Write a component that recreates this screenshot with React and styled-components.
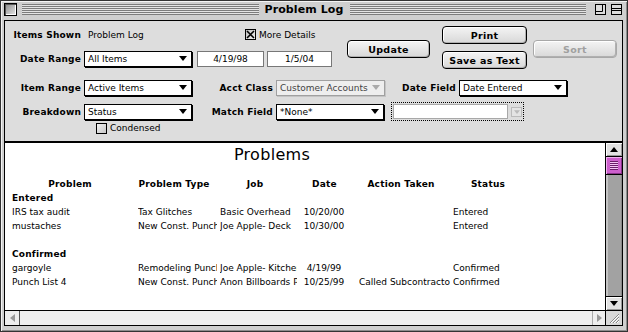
import React from 'react'
import styled, { createGlobalStyle } from 'styled-components'

const sans = `"DejaVu Sans", Verdana, sans-serif`

const GlobalStyle = createGlobalStyle`
  html, body { margin: 0; padding: 0; background: #fff; }
  body { font-family: ${sans}; font-size: 9px; color: #000; }
  * { box-sizing: border-box; }
`

const columns = [
    { key: 'problem', title: 'Problem', width: 126 },
    { key: 'type', title: 'Problem Type', width: 82 },
    { key: 'job', title: 'Job', width: 80 },
    { key: 'date', title: 'Date', width: 59, center: true },
    { key: 'action', title: 'Action Taken', width: 94 },
    { key: 'status', title: 'Status', width: 80 },
]

const groups = [
    {
        name: 'Entered',
        rows: [
            ['IRS tax audit', 'Tax Glitches', 'Basic Overhead', '10/20/00', '', 'Entered'],
            ['mustaches', 'New Const. Punch List', 'Joe Apple- Deck', '10/30/00', '', 'Entered'],
        ],
    },
    {
        name: 'Confirmed',
        rows: [
            ['gargoyle', 'Remodeling Punch List', 'Joe Apple- Kitchen', '4/19/99', '', 'Confirmed'],
            ['Punch List 4', 'New Const. Punch List', 'Anon Billboards Pro', '10/25/99', 'Called Subcontractor', 'Confirmed'],
        ],
    },
]

const DownTri = ({ color = '#000' }) => (
    <svg width="8" height="5" viewBox="0 0 8 5"><polygon points="0,0 8,0 4,5" fill={color} /></svg>
)

const Cross = () => (
    <svg width="9" height="9" viewBox="0 0 9 9">
        <path d="M1 1 L8 8 M8 1 L1 8" stroke="#000" strokeWidth="1.6" />
    </svg>
)

const App = () => {
    return (
        <>
            <GlobalStyle />
            <Window>
                <TitleBar>
                    <CloseBox />
                    <Stripes />
                    <Title>Problem Log</Title>
                    <Stripes />
                    <WidgetBox>
                        <svg width="11" height="11" viewBox="0 0 11 11">
                            <rect x="0.5" y="0.5" width="10" height="10" fill="#ddd" stroke="#000" />
                            <path d="M0.5 7.5 H7.5 V0.5" fill="none" stroke="#000" />
                        </svg>
                    </WidgetBox>
                    <WidgetBox>
                        <svg width="11" height="11" viewBox="0 0 11 11">
                            <rect x="0.5" y="0.5" width="10" height="10" fill="#ddd" stroke="#000" />
                            <path d="M0.5 4.5 H10.5 M0.5 6.5 H10.5" stroke="#000" />
                        </svg>
                    </WidgetBox>
                </TitleBar>

                <Content>
                    <Panel>
                        <TopSection>
                            <LeftCol>
                                <Row>
                                    <Label $w={76}>Items Shown</Label>
                                    <Value>Problem Log</Value>
                                    <CheckBox><Cross /></CheckBox>
                                    <CheckText>More Details</CheckText>
                                </Row>
                                <Row>
                                    <Label $w={76}>Date Range</Label>
                                    <Select $w={108}><span>All Items</span><DownTri /></Select>
                                    <DateField $w={67} $ml={5}>4/19/98</DateField>
                                    <DateField $w={65} $ml={3}>1/5/04</DateField>
                                </Row>
                            </LeftCol>
                            <Button $w={83} $ml={14} $mt={14}>Update</Button>
                            <ButtonCol>
                                <Button $w={85}>Print</Button>
                                <Button $w={85}>Save as Text</Button>
                            </ButtonCol>
                            <Button $w={84} $ml={6} $mt={14} disabled>Sort</Button>
                        </TopSection>

                        <Row $mt={9}>
                            <Label $w={76}>Item Range</Label>
                            <Select $w={108}><span>Active Items</span><DownTri /></Select>
                            <Label $w={81}>Acct Class</Label>
                            <Select $w={109} $disabled><span>Customer Accounts</span><DownTri color="#aaa" /></Select>
                            <Label $w={71}>Date Field</Label>
                            <Select $w={108}><span>Date Entered</span><DownTri /></Select>
                        </Row>
                        <Row $mt={7}>
                            <Label $w={76}>Breakdown</Label>
                            <Select $w={108}><span>Status</span><DownTri /></Select>
                            <Label $w={81}>Match Field</Label>
                            <Select $w={108}><span>*None*</span><DownTri /></Select>
                            <DottedBox>
                                <GhostField />
                                <GhostArrow><DownTri color="#bbb" /></GhostArrow>
                            </DottedBox>
                        </Row>
                        <CheckRow>
                            <CheckBox $plain />
                            <CheckText>Condensed</CheckText>
                        </CheckRow>
                    </Panel>

                    <Body>
                        <Report>
                            <ReportTitle>Problems</ReportTitle>
                            <TableRow>
                                {columns.map(c => (
                                    <HeadCell key={c.key}>{c.title}</HeadCell>
                                ))}
                            </TableRow>
                            {groups.map((g, gi) => (
                                <React.Fragment key={g.name}>
                                    {gi > 0 && <TableRow />}
                                    <GroupName>{g.name}</GroupName>
                                    {g.rows.map((r, ri) => (
                                        <TableRow key={ri}>
                                            {r.map((v, ci) => (
                                                <Cell key={ci} $center={columns[ci].center}>{v}</Cell>
                                            ))}
                                        </TableRow>
                                    ))}
                                </React.Fragment>
                            ))}
                        </Report>
                        <VScroll>
                            <ArrowBox>
                                <svg width="8" height="5" viewBox="0 0 8 5"><polygon points="0,5 8,5 4,0" fill="#000" /></svg>
                            </ArrowBox>
                            <Thumb><Grip /></Thumb>
                            <Track />
                            <ArrowBox $down><DownTri /></ArrowBox>
                        </VScroll>
                    </Body>

                    <HScroll>
                        <HArrow $left>
                            <svg width="5" height="8" viewBox="0 0 5 8"><polygon points="5,0 5,8 0,4" fill="#999" /></svg>
                        </HArrow>
                        <HTrack />
                        <HArrow>
                            <svg width="5" height="8" viewBox="0 0 5 8"><polygon points="0,0 0,8 5,4" fill="#999" /></svg>
                        </HArrow>
                        <GrowBox>
                            <svg width="14" height="14" viewBox="0 0 14 14">
                                <path d="M3 12 L12 3 M6 12 L12 6 M9 12 L12 9" stroke="#888" strokeWidth="1" />
                                <path d="M4 12 L12 4 M7 12 L12 7 M10 12 L12 10" stroke="#fff" strokeWidth="1" />
                            </svg>
                        </GrowBox>
                    </HScroll>
                </Content>
            </Window>
        </>
    )
}

export default App

const Window = styled.div`
    width: 628px;
    height: 332px;
    border: 1px solid #333;
    background: #cfcfcf;
    box-shadow: inset 1px 1px 0 #f4f4f4, inset -1px -1px 0 #8c8c8c;
    display: flex;
    flex-direction: column;
`

const TitleBar = styled.div`
    height: 17px;
    display: flex;
    align-items: center;
    padding: 0 4px 0 3px;
`

const CloseBox = styled.div`
    width: 13px;
    height: 13px;
    border: 1px solid #000;
    background: linear-gradient(135deg, #8a8a8a, #e8e8e8);
    box-shadow: inset 1px 1px 0 #555, inset -1px -1px 0 #fff;
`

const Stripes = styled.div`
    flex: 1;
    height: 11px;
    margin: 0 5px;
    background: repeating-linear-gradient(to bottom, #7c7c7c 0 1px, #e4e4e4 1px 2px);
`

const Title = styled.div`
    font-weight: bold;
    font-size: 11px;
    line-height: 17px;
    letter-spacing: 0.1px;
    padding: 0 1px;
`

const WidgetBox = styled.div`
    width: 12px;
    height: 12px;
    margin-left: 4px;
    display: flex;

    &:first-of-type {
        margin-left: 0;
    }
`

const Content = styled.div`
    flex: 1;
    margin: 2px 4px 5px 3px;
    border: 1px solid #000;
    background: #fff;
    display: flex;
    flex-direction: column;
    overflow: hidden;
`

const Panel = styled.div`
    height: 122px;
    flex: none;
    background: #dddddd;
    border-bottom: 2px solid #000;
    padding-top: 5px;
`

const TopSection = styled.div`
    display: flex;
    align-items: flex-start;
    height: 44px;
`

const LeftCol = styled.div`
    width: 328px;
    display: flex;
    flex-direction: column;
    gap: 7px;
`

const Row = styled.div`
    display: flex;
    align-items: center;
    height: 17px;
    margin-top: ${p => p.$mt || 0}px;
`

const Label = styled.span`
    width: ${p => p.$w}px;
    flex: none;
    text-align: right;
    margin-right: 3px;
    font-weight: bold;
    letter-spacing: 0.2px;
    white-space: nowrap;
`

const Value = styled.span`
    width: 157px;
    margin-left: 4px;
    white-space: nowrap;
`

const CheckBox = styled.span`
    width: 11px;
    height: 11px;
    flex: none;
    border: 1px solid #000;
    background: ${p => p.$plain ? 'linear-gradient(135deg, #f2f2f2, #c8c8c8)' : 'linear-gradient(135deg, #bdbdbd, #f0f0f0)'};
    display: flex;
    align-items: center;
    justify-content: center;
`

const CheckText = styled.span`
    margin-left: 3px;
    white-space: nowrap;
`

const CheckRow = styled.div`
    display: flex;
    align-items: center;
    height: 14px;
    margin-top: 1px;
    padding-left: 91px;
`

const Select = styled.div`
    width: ${p => p.$w}px;
    height: 16px;
    flex: none;
    display: flex;
    align-items: center;
    justify-content: space-between;
    padding: 0 4px 0 3px;
    background: ${p => p.$disabled ? '#eeeeee' : '#fff'};
    border: 1px solid ${p => p.$disabled ? '#a0a0a0' : '#000'};
    box-shadow: 1px 1px 0 ${p => p.$disabled ? '#c4c4c4' : '#000'};
    color: ${p => p.$disabled ? '#444' : '#000'};
    white-space: nowrap;
    overflow: hidden;
`

const DateField = styled.div`
    width: ${p => p.$w}px;
    height: 16px;
    margin-left: ${p => p.$ml}px;
    border: 1px solid #777;
    background: #fff;
    text-align: center;
    line-height: 14px;
`

const Button = styled.button`
    width: ${p => p.$w}px;
    height: 18px;
    margin-left: ${p => p.$ml || 0}px;
    margin-top: ${p => p.$mt || 0}px;
    padding: 0;
    border: 1px solid ${p => p.disabled ? '#a8a8a8' : '#000'};
    border-radius: 4px;
    background: linear-gradient(#f4f4f4, #d8d8d8);
    box-shadow: inset 1px 1px 0 #fff, inset -1px -1px 0 #b0b0b0;
    font-family: ${sans};
    font-weight: bold;
    font-size: 9.5px;
    letter-spacing: 0.3px;
    color: ${p => p.disabled ? '#a0a0a0' : '#000'};
`

const ButtonCol = styled.div`
    display: flex;
    flex-direction: column;
    gap: 7px;
    margin-left: 12px;
`

const DottedBox = styled.div`
    width: 133px;
    height: 19px;
    margin-left: 7px;
    border: 1px dotted #000;
    display: flex;
    align-items: center;
    padding-left: 1px;
    gap: 3px;
`

const GhostField = styled.div`
    width: 115px;
    height: 15px;
    border: 1px solid #a8a8a8;
    background: #fff;
`

const GhostArrow = styled.div`
    width: 11px;
    height: 10px;
    border: 1px solid #bbb;
    background: #e4e4e4;
    display: flex;
    align-items: center;
    justify-content: center;

    svg { width: 6px; height: 4px; }
`

const Body = styled.div`
    flex: 1;
    display: flex;
    min-height: 0;
`

const Report = styled.div`
    flex: 1;
    background: #fff;
    overflow: hidden;
    padding: 2px 0 0 7px;
`

const ReportTitle = styled.div`
    width: 520px;
    height: 20px;
    line-height: 20px;
    text-align: center;
    font-size: 16px;
    letter-spacing: 0.3px;
    margin-bottom: 12px;
`

const TableRow = styled.div`
    display: grid;
    grid-template-columns: ${columns.map(c => c.width + 'px').join(' ')};
    height: 14px;
    line-height: 14px;
`

const HeadCell = styled.div`
    font-weight: bold;
    letter-spacing: 0.2px;
    text-align: center;
    padding-right: 10px;
    white-space: nowrap;
`

const GroupName = styled.div`
    height: 14px;
    line-height: 14px;
    font-weight: bold;
    letter-spacing: 0.2px;
`

const Cell = styled.div`
    min-width: 0;
    white-space: nowrap;
    overflow: hidden;
    text-overflow: clip;
    margin-right: ${p => p.$center ? 0 : 3}px;
    padding-right: ${p => p.$center ? 11 : 0}px;
    text-align: ${p => p.$center ? 'center' : 'left'};
`

const VScroll = styled.div`
    width: 17px;
    flex: none;
    border-left: 1px solid #000;
    display: flex;
    flex-direction: column;
`

const ArrowBox = styled.div`
    height: 14px;
    flex: none;
    background: #e2e2e2;
    box-shadow: inset 1px 1px 0 #fff, inset -1px -1px 0 #999;
    border-${p => p.$down ? 'top' : 'bottom'}: 1px solid #000;
    display: flex;
    align-items: center;
    justify-content: center;
`

const Thumb = styled.div`
    height: 18px;
    flex: none;
    background: #cc5fcc;
    border-bottom: 1px solid #000;
    box-shadow: inset 1px 1px 0 #f0b0f0, inset -1px -1px 0 #883388;
    display: flex;
    align-items: center;
    justify-content: center;
`

const Grip = styled.div`
    width: 8px;
    height: 9px;
    background: repeating-linear-gradient(to bottom, #6a1f6a 0 1px, #f4c4f4 1px 2px);
`

const Track = styled.div`
    flex: 1;
    background: #a2a2a2;
    box-shadow: inset 2px 0 0 #c4c4c4, inset -1px 0 0 #888;
`

const HScroll = styled.div`
    height: 15px;
    flex: none;
    border-top: 1px solid #000;
    background: #eeeeee;
    display: flex;
`

const HArrow = styled.div`
    width: ${p => p.$left ? 15 : 13}px;
    flex: none;
    display: flex;
    align-items: center;
    justify-content: center;
    border-${p => p.$left ? 'right' : 'left'}: 1px solid ${p => p.$left ? '#555' : '#aaa'};
`

const HTrack = styled.div`
    flex: 1;
`

const GrowBox = styled.div`
    width: 17px;
    flex: none;
    border-left: 1px solid #000;
    background: #d8d8d8;
    display: flex;
    align-items: center;
    justify-content: center;
`
